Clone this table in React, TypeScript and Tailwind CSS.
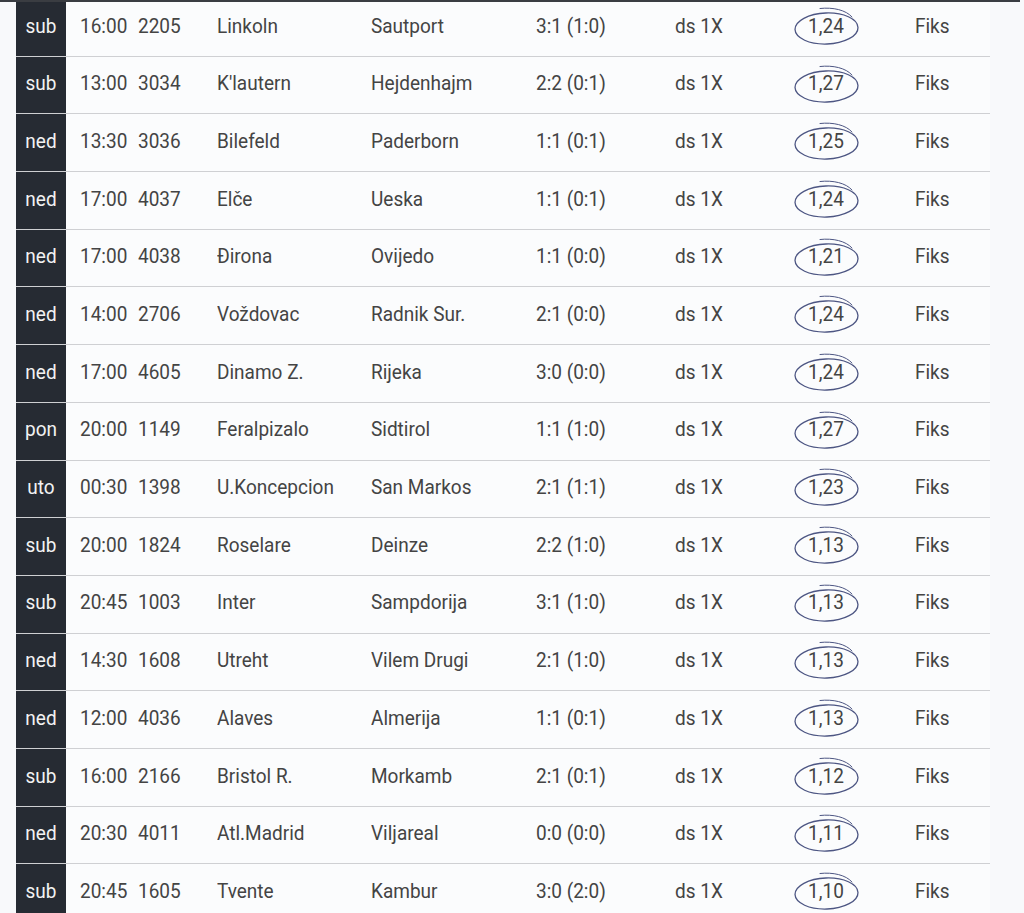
import React from 'react'

type Row = [string, string, string, string, string, string, string]

const rows: Row[] = [
  ['sub', '16:00', '2205', 'Linkoln', 'Sautport', '3:1 (1:0)', '1,24'],
  ['sub', '13:00', '3034', "K'lautern", 'Hejdenhajm', '2:2 (0:1)', '1,27'],
  ['ned', '13:30', '3036', 'Bilefeld', 'Paderborn', '1:1 (0:1)', '1,25'],
  ['ned', '17:00', '4037', 'Elče', 'Ueska', '1:1 (0:1)', '1,24'],
  ['ned', '17:00', '4038', 'Đirona', 'Ovijedo', '1:1 (0:0)', '1,21'],
  ['ned', '14:00', '2706', 'Voždovac', 'Radnik Sur.', '2:1 (0:0)', '1,24'],
  ['ned', '17:00', '4605', 'Dinamo Z.', 'Rijeka', '3:0 (0:0)', '1,24'],
  ['pon', '20:00', '1149', 'Feralpizalo', 'Sidtirol', '1:1 (1:0)', '1,27'],
  ['uto', '00:30', '1398', 'U.Koncepcion', 'San Markos', '2:1 (1:1)', '1,23'],
  ['sub', '20:00', '1824', 'Roselare', 'Deinze', '2:2 (1:0)', '1,13'],
  ['sub', '20:45', '1003', 'Inter', 'Sampdorija', '3:1 (1:0)', '1,13'],
  ['ned', '14:30', '1608', 'Utreht', 'Vilem Drugi', '2:1 (1:0)', '1,13'],
  ['ned', '12:00', '4036', 'Alaves', 'Almerija', '1:1 (0:1)', '1,13'],
  ['sub', '16:00', '2166', 'Bristol R.', 'Morkamb', '2:1 (0:1)', '1,12'],
  ['ned', '20:30', '4011', 'Atl.Madrid', 'Viljareal', '0:0 (0:0)', '1,11'],
  ['sub', '20:45', '1605', 'Tvente', 'Kambur', '3:0 (2:0)', '1,10'],
]

// hand-drawn circle around the odds
function Oval() {
  return (
    <svg width="72" height="44" viewBox="0 0 72 44" className="absolute left-[-3px] top-[-4px]" fill="none">
      <ellipse cx="35.5" cy="23.5" rx="31.5" ry="15.5" transform="rotate(-2 35.5 23.5)" stroke="#4d5683" strokeWidth="1.3" />
      <path d="M29 3.5 C42 2 55 5 61 12" stroke="#4d5683" strokeWidth="1" strokeLinecap="round" />
    </svg>
  )
}

function Cell({ className, children }: { className: string; children: React.ReactNode }) {
  return (
    <div className={className}>
      <span className="inline-block scale-y-110 whitespace-nowrap">{children}</span>
    </div>
  )
}

export default function App() {
  return (
    <div
      className="relative w-[1024px] h-[913px] overflow-hidden bg-[#f8f9fb] text-[19px] text-[#444]"
      style={{ fontFamily: 'Roboto, "Liberation Sans", sans-serif' }}
    >
      {/* edge of the header above */}
      <div className="absolute left-0 top-0 h-[2px] w-[1020px] bg-[#3a3d42]" />

      <div className="ml-[16px] w-[974px] -mt-[1px] bg-[#fbfcfd]">
        {rows.map(([day, time, id, home, away, score, odds], i) => (
          <div key={i} className="flex h-[57.7px] items-center border-b border-[#cfd0d3]">
            <div className="flex h-full w-[50px] items-center justify-center bg-[#262b33] pb-[3px] text-[#f2f2f2]">
              <span className="inline-block scale-y-110">{day}</span>
            </div>
            <div className="flex h-full items-center pb-[3px]">
              <Cell className="ml-[14px] w-[58px]">{time}</Cell>
              <Cell className="w-[79px]">{id}</Cell>
              <Cell className="w-[154px]">{home}</Cell>
              <Cell className="w-[165px]">{away}</Cell>
              <Cell className="w-[139px]">{score}</Cell>
              <Cell className="w-[119px]">ds 1X</Cell>
              <div className="relative flex h-[34px] w-[64px] items-center justify-center">
                <Oval />
                <span className="relative inline-block scale-y-110">{odds}</span>
              </div>
              <Cell className="ml-[57px]">Fiks</Cell>
            </div>
          </div>
        ))}
      </div>
    </div>
  )
}
